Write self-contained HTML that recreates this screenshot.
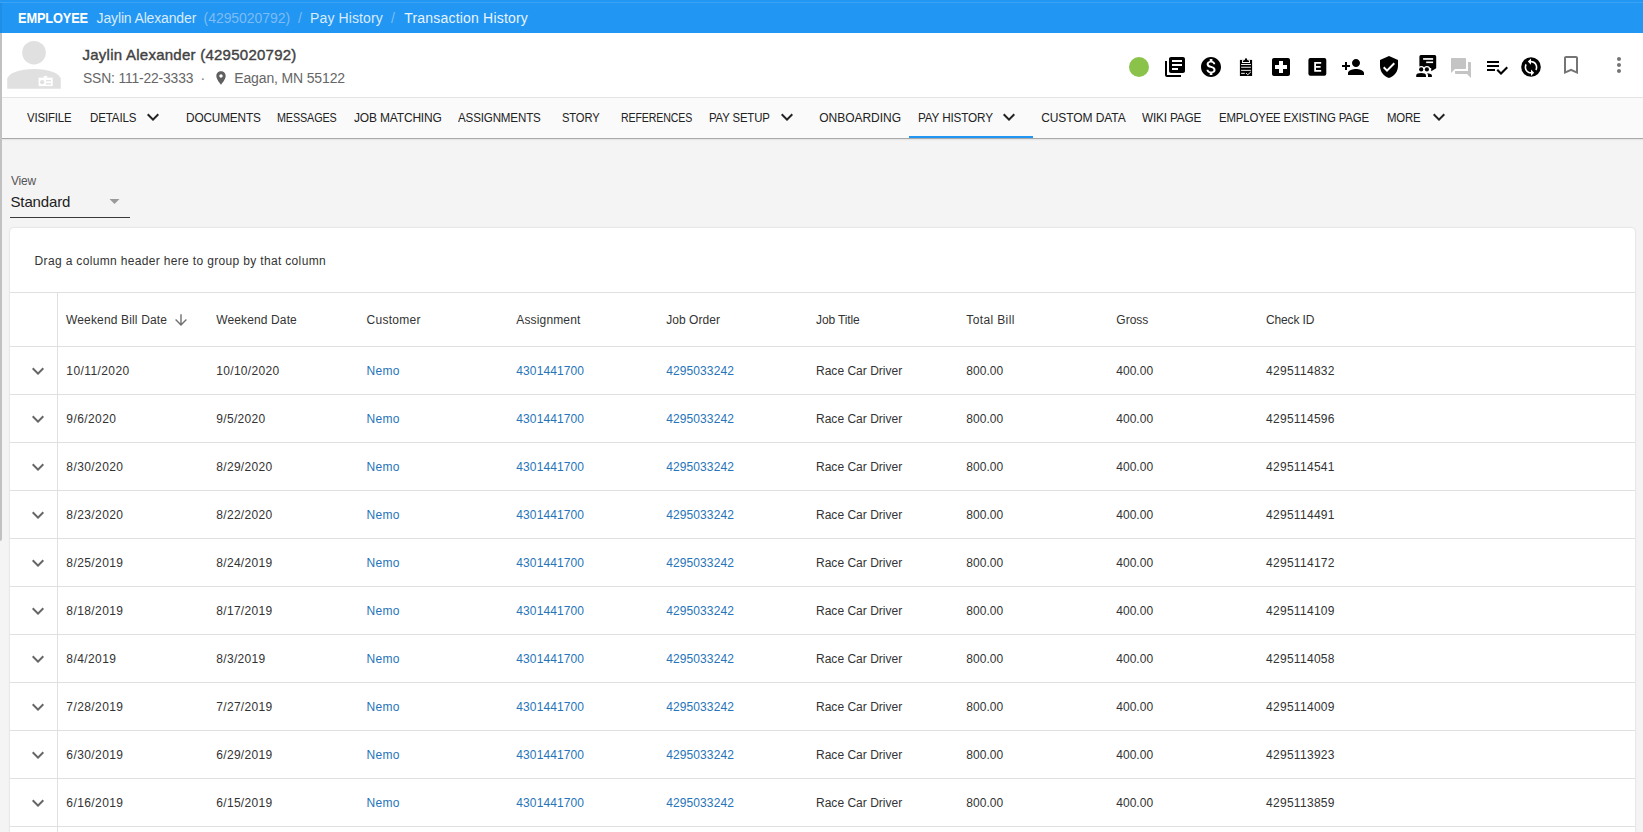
<!DOCTYPE html>
<html><head><meta charset="utf-8"><title>Transaction History</title>
<style>
html,body{margin:0;padding:0}
body{width:1643px;height:832px;overflow:hidden;position:relative;background:#f4f4f4;font-family:"Liberation Sans",sans-serif}
.t{position:absolute;white-space:nowrap;line-height:1;transform-origin:0 0}
.a{position:absolute}
svg.a{overflow:visible}
</style></head><body>
<!-- top bar -->
<div class="a" style="left:0;top:0;width:1643px;height:33px;background:#2196f3"></div>
<div class="a" style="left:0;top:2px;width:1643px;height:1px;background:#3da3f5"></div>
<!-- header -->
<div class="a" style="left:0;top:33px;width:1643px;height:64px;background:#ffffff"></div>
<div class="a" style="left:0;top:97px;width:1643px;height:1px;background:#e4e4e4"></div>
<svg class="a" style="left:0;top:0" width="80" height="100" viewBox="0 0 80 100">
 <circle cx="34" cy="52.7" r="11.8" fill="#e0e0e0"/>
 <path d="M7.2 88.7V79.6A26.8 10.7 0 0 1 60.8 79.6V88.7Z" fill="#e0e0e0"/>
 <rect x="38.6" y="77.6" width="14.1" height="8.5" fill="#fff"/>
 <rect x="43.8" y="75.9" width="3.4" height="2" fill="#fff"/>
 <circle cx="42.2" cy="82.2" r="2.1" fill="#e0e0e0"/>
 <rect x="46" y="80.1" width="5" height="1.2" fill="#e0e0e0"/>
 <rect x="46" y="83.2" width="5" height="1.4" fill="#e0e0e0"/>
</svg>
<svg class="a" style="left:213.4px;top:69.9px" width="16" height="16" viewBox="0 0 24 24"><path fill="#5f5f5f" d="M12 2C8.13 2 5 5.13 5 9c0 5.25 7 13 7 13s7-7.75 7-13c0-3.87-3.13-7-7-7zm0 9.5c-1.38 0-2.5-1.12-2.5-2.5s1.12-2.5 2.5-2.5 2.5 1.12 2.5 2.5-1.12 2.5-2.5 2.5z"/></svg>
<!-- header icons -->
<div class="a" style="left:1129px;top:57px;width:20px;height:20px;border-radius:50%;background:#8bc34a"></div>
<svg class="a" style="left:1163px;top:55px" width="24" height="24" viewBox="0 0 24 24"><path fill="#000" d="M4 6H2v14c0 1.1.9 2 2 2h14v-2H4V6zm16-4H8c-1.1 0-2 .9-2 2v12c0 1.1.9 2 2 2h12c1.1 0 2-.9 2-2V4c0-1.1-.9-2-2-2zm-1 9H9V9h10v2zm-4 4H9v-2h6v2zm4-8H9V5h10v2z"/></svg>
<svg class="a" style="left:1199px;top:55px" width="24" height="24" viewBox="0 0 24 24"><path fill="#000" d="M12 2C6.48 2 2 6.48 2 12s4.48 10 10 10 10-4.48 10-10S17.52 2 12 2zm1.41 16.09V20h-2.67v-1.93c-1.71-.36-3.16-1.46-3.27-3.4h1.96c.1 1.05.82 1.870 2.65 1.87 1.96 0 2.4-.98 2.4-1.59 0-.83-.44-1.61-2.67-2.14-2.480-.6-4.18-1.62-4.18-3.67 0-1.72 1.39-2.84 3.11-3.21V4h2.67v1.95c1.86.45 2.79 1.86 2.85 3.39H14.3c-.05-1.11-.64-1.87-2.22-1.87-1.5 0-2.4.68-2.4 1.64 0 .84.65 1.39 2.67 1.910s4.18 1.39 4.18 3.91c-.01 1.83-1.38 2.83-3.12 3.16z"/></svg>
<svg class="a" style="left:1232px;top:52px" width="24" height="28" viewBox="0 0 24 28">
 <path fill="#000" d="M7.9 7.9H20.1V24H7.9Z"/>
 <path fill="#fff" d="M10 11V8.2L12.2 7.4L14 5L15.8 7.4L18 8.2V11Z"/>
 <path fill="#000" d="M10.9 10.1V8.8L12.8 8.1L14 6.2L15.2 8.1L17.1 8.8V10.1Z"/>
 <path fill="#000" d="M12.5 8.2L14 5.8L15.5 8.2Z"/>
 <rect x="9.1" y="12.05" width="9.8" height="0.95" fill="#fff"/>
 <rect x="9.1" y="14.75" width="9.8" height="0.95" fill="#fff"/>
 <rect x="9.1" y="17.85" width="9.8" height="0.95" fill="#fff"/>
 <rect x="9.1" y="20.85" width="3.7" height="0.95" fill="#fff"/>
 <path d="M14 21L15.7 22.8L18.9 19.9" stroke="#fff" stroke-width="0.9" fill="none"/>
</svg>
<svg class="a" style="left:1269px;top:55px" width="24" height="24" viewBox="0 0 24 24"><path fill="#000" d="M19 3H5c-1.1 0-1.99.9-1.99 2L3 19c0 1.1.9 2 2 2h14c1.1 0 2-.9 2-2V5c0-1.1-.9-2-2-2zm-1 11h-4v4h-4v-4H6v-4h4V6h4v4h4v4z"/></svg>
<svg class="a" style="left:1308px;top:57px" width="19" height="20" viewBox="0 0 19 20">
 <rect x="0.4" y="1.1" width="17.9" height="17.6" rx="2" fill="#000"/>
 <path fill="#fff" d="M6.2 5H13.2V6.7H8V9H12.6V10.7H8V13.1H13.2V14.8H6.2Z"/>
</svg>
<svg class="a" style="left:1340.6px;top:55px" width="24" height="24" viewBox="0 0 24 24"><path fill="#000" d="M15 12c2.21 0 4-1.79 4-4s-1.79-4-4-4-4 1.79-4 4 1.79 4 4 4zm-9-2V7H4v3H1v2h3v3h2v-3h3v-2H6zm9 4c-2.67 0-8 1.34-8 4v2h16v-2c0-2.66-5.33-4-8-4z"/></svg>
<svg class="a" style="left:1376.7px;top:55px" width="24" height="24" viewBox="0 0 24 24"><path fill="#000" d="M12 1L3 5v6c0 5.550 3.84 10.74 9 12 5.16-1.26 9-6.45 9-12V5l-9-4zm-2 16l-4-4 1.41-1.41L10 14.17l6.59-6.59L18 9l-8 8z"/></svg>
<svg class="a" style="left:1410px;top:50px" width="32" height="32" viewBox="0 0 32 32">
 <path fill="#000" d="M10.9 5H24.7Q26.2 5 26.2 6.5V18.3L21.2 21.2V18H9.4V6.5Q9.4 5 10.9 5Z"/>
 <rect x="13.1" y="8.1" width="10" height="1.7" fill="#fff"/>
 <rect x="16.2" y="11.5" width="6.9" height="1.6" fill="#fff"/>
 <circle cx="11.2" cy="19.4" r="3.5" fill="#fff"/>
 <circle cx="16.9" cy="19.4" r="3.5" fill="#fff"/>
 <rect x="8" y="18" width="12" height="4" fill="#fff"/>
 <circle cx="11.2" cy="19.4" r="2.1" fill="#000"/>
 <circle cx="16.9" cy="19.4" r="2.1" fill="#000"/>
 <path fill="#000" d="M6.2 26.9V25.4C6.2 23.9 8.4 23.1 11.1 23.1C13.8 23.1 16 23.9 16 25.4V26.9Z"/>
 <path fill="#000" d="M17.1 23.2C19.8 23.3 21.9 24.1 21.9 25.5V26.9H18V25.4C18 24.6 17.7 23.8 17.1 23.2Z"/>
</svg>
<svg class="a" style="left:1449px;top:55.5px" width="24" height="24" viewBox="0 0 24 24"><path fill="#c4c4c4" d="M21 6h-2v9H6v2c0 .55.45 1 1 1h11l4 4V7c0-.55-.45-1-1-1zm-4 6V3c0-.55-.45-1-1-1H3c-.55 0-1 .45-1 1v14l4-4h10c.55 0 1-.45 1-1z"/></svg>
<svg class="a" style="left:1485px;top:54.8px" width="24" height="24" viewBox="0 0 24 24"><path fill="#000" d="M14 10H2v2h12v-2zm0-4H2v2h12V6zM2 16h8v-2H2v2zm19.5-4.5L23 13l-6.99 7-4.51-4.5L13 14l3.01 3 5.49-5.5z"/></svg>
<svg class="a" style="left:1519px;top:54.7px" width="24" height="24" viewBox="0 0 24 24">
 <circle cx="12" cy="12" r="9.8" fill="#000"/>
 <g transform="translate(12 12.2) scale(0.8) translate(-12 -12)"><path fill="#fff" d="M12 4V1L8 5l4 4V6c3.31 0 6 2.69 6 6 0 1.01-.25 1.97-.7 2.8l1.46 1.46C19.54 15.030 20 13.57 20 12c0-4.42-3.58-8-8-8zm0 14c-3.31 0-6-2.69-6-6 0-1.01.25-1.97.7-2.8L5.24 7.74C4.46 8.97 4 10.43 4 12c0 4.42 3.58 8 8 8v3l4-4-4-4v3z"/></g>
</svg>
<svg class="a" style="left:1558.7px;top:52.7px" width="24" height="24" viewBox="0 0 24 24"><path fill="#757575" d="M17 3H7c-1.1 0-1.99.9-1.99 2L5 21l7-3 7 3V5c0-1.1-.9-2-2-2zm0 15l-5-2.18L7 18V5h10v13z"/></svg>
<svg class="a" style="left:1607px;top:53px" width="24" height="24" viewBox="0 0 24 24"><path fill="#757575" d="M12 8c1.1 0 2-.9 2-2s-.9-2-2-2-2 .9-2 2 .9 2 2 2zm0 2c-1.1 0-2 .9-2 2s.9 2 2 2 2-.9 2-2-.9-2-2-2zm0 6c-1.1 0-2 .9-2 2s.9 2 2 2 2-.9 2-2-.9-2-2-2z"/></svg>
<!-- nav -->
<div class="a" style="left:0;top:98px;width:1643px;height:40px;background:#fafafa"></div>
<div class="a" style="left:0;top:138px;width:1643px;height:1px;background:#a8a8a8"></div>
<div class="a" style="left:0;top:139px;width:1643px;height:2px;background:linear-gradient(#e2e2e2,#f4f4f4)"></div>
<div class="a" style="left:909px;top:136px;width:124px;height:2px;background:#2196f3"></div>
<svg class="a" style="left:141.3px;top:105.1px" width="24" height="24" viewBox="0 0 24 24"><path fill="#222" d="M16.59 8.59L12 13.17 7.41 8.59 6 10l6 6 6-6z"/></svg>
<svg class="a" style="left:775.4px;top:105.1px" width="24" height="24" viewBox="0 0 24 24"><path fill="#222" d="M16.59 8.59L12 13.17 7.41 8.59 6 10l6 6 6-6z"/></svg>
<svg class="a" style="left:997px;top:105.1px" width="24" height="24" viewBox="0 0 24 24"><path fill="#222" d="M16.59 8.59L12 13.17 7.41 8.59 6 10l6 6 6-6z"/></svg>
<svg class="a" style="left:1427.3px;top:105.1px" width="24" height="24" viewBox="0 0 24 24"><path fill="#222" d="M16.59 8.59L12 13.17 7.41 8.59 6 10l6 6 6-6z"/></svg>
<!-- view select -->
<div class="a" style="left:10px;top:217px;width:120px;height:1px;background:#3a3a3a"></div>
<svg class="a" style="left:109px;top:198px" width="12" height="7" viewBox="0 0 12 7"><path fill="#9a9a9a" d="M0.5 1H10.5L5.5 6Z"/></svg>
<!-- card -->
<div class="a" style="left:10px;top:228px;width:1625px;height:620px;background:#fff;border-radius:4px;box-shadow:0 0 2px rgba(0,0,0,0.18)"></div>
<div class="a" style="left:10px;top:292px;width:1625px;height:1px;background:#e0e0e0"></div>
<div class="a" style="left:57px;top:293px;width:1px;height:560px;background:#e0e0e0"></div>
<div class="a" style="left:10px;top:346px;width:1625px;height:1px;background:#e0e0e0"></div>
<div class="a" style="left:10px;top:394px;width:1625px;height:1px;background:#e0e0e0"></div>
<div class="a" style="left:10px;top:442px;width:1625px;height:1px;background:#e0e0e0"></div>
<div class="a" style="left:10px;top:490px;width:1625px;height:1px;background:#e0e0e0"></div>
<div class="a" style="left:10px;top:538px;width:1625px;height:1px;background:#e0e0e0"></div>
<div class="a" style="left:10px;top:586px;width:1625px;height:1px;background:#e0e0e0"></div>
<div class="a" style="left:10px;top:634px;width:1625px;height:1px;background:#e0e0e0"></div>
<div class="a" style="left:10px;top:682px;width:1625px;height:1px;background:#e0e0e0"></div>
<div class="a" style="left:10px;top:730px;width:1625px;height:1px;background:#e0e0e0"></div>
<div class="a" style="left:10px;top:778px;width:1625px;height:1px;background:#e0e0e0"></div>
<div class="a" style="left:10px;top:826px;width:1625px;height:1px;background:#e0e0e0"></div>
<svg class="a" style="left:0;top:0" width="200" height="340" viewBox="0 0 200 340"><path d="M181 314.2V325M175.6 319.6L181 325L186.4 319.6" stroke="#707070" stroke-width="1.4" fill="none"/></svg>
<svg class="a" style="left:26px;top:358.9px" width="24" height="24" viewBox="0 0 24 24"><path fill="#666" d="M16.59 8.59L12 13.17 7.41 8.59 6 10l6 6 6-6z"/></svg>
<svg class="a" style="left:26px;top:406.9px" width="24" height="24" viewBox="0 0 24 24"><path fill="#666" d="M16.59 8.59L12 13.17 7.41 8.59 6 10l6 6 6-6z"/></svg>
<svg class="a" style="left:26px;top:454.9px" width="24" height="24" viewBox="0 0 24 24"><path fill="#666" d="M16.59 8.59L12 13.17 7.41 8.59 6 10l6 6 6-6z"/></svg>
<svg class="a" style="left:26px;top:502.9px" width="24" height="24" viewBox="0 0 24 24"><path fill="#666" d="M16.59 8.59L12 13.17 7.41 8.59 6 10l6 6 6-6z"/></svg>
<svg class="a" style="left:26px;top:550.9px" width="24" height="24" viewBox="0 0 24 24"><path fill="#666" d="M16.59 8.59L12 13.17 7.41 8.59 6 10l6 6 6-6z"/></svg>
<svg class="a" style="left:26px;top:598.9px" width="24" height="24" viewBox="0 0 24 24"><path fill="#666" d="M16.59 8.59L12 13.17 7.41 8.59 6 10l6 6 6-6z"/></svg>
<svg class="a" style="left:26px;top:646.9px" width="24" height="24" viewBox="0 0 24 24"><path fill="#666" d="M16.59 8.59L12 13.17 7.41 8.59 6 10l6 6 6-6z"/></svg>
<svg class="a" style="left:26px;top:694.9px" width="24" height="24" viewBox="0 0 24 24"><path fill="#666" d="M16.59 8.59L12 13.17 7.41 8.59 6 10l6 6 6-6z"/></svg>
<svg class="a" style="left:26px;top:742.9px" width="24" height="24" viewBox="0 0 24 24"><path fill="#666" d="M16.59 8.59L12 13.17 7.41 8.59 6 10l6 6 6-6z"/></svg>
<svg class="a" style="left:26px;top:790.9px" width="24" height="24" viewBox="0 0 24 24"><path fill="#666" d="M16.59 8.59L12 13.17 7.41 8.59 6 10l6 6 6-6z"/></svg>
<!-- scrollbar thumb -->
<div class="a" style="left:0;top:33px;width:2px;height:508px;background:#c1c1c1;border-radius:0 0 2px 0"></div>
<div class="a" style="left:0;top:3px;width:2px;height:30px;background:#1e8ee6"></div>
<div class="t" style="left:18.30px;top:11.15px;font-size:14px;color:#ffffff;font-weight:700;letter-spacing:-0.150px;transform:scaleX(0.9136);">EMPLOYEE</div>
<div class="t" style="left:96.60px;top:11.15px;font-size:14px;color:#d9ecfd;letter-spacing:-0.150px;">Jaylin Alexander</div>
<div class="t" style="left:203.60px;top:11.15px;font-size:14px;color:#7dbcf4;letter-spacing:-0.066px;">(4295020792)</div>
<div class="t" style="left:298.00px;top:11.15px;font-size:14px;color:#7dbcf4;">/</div>
<div class="t" style="left:310.10px;top:11.15px;font-size:14px;color:#d9ecfd;letter-spacing:0.103px;">Pay History</div>
<div class="t" style="left:391.00px;top:11.15px;font-size:14px;color:#7dbcf4;">/</div>
<div class="t" style="left:404.30px;top:11.15px;font-size:14px;color:#e8f4fe;letter-spacing:0.190px;">Transaction History</div>
<div class="t" style="left:82.50px;top:46.70px;font-size:15px;color:#424242;letter-spacing:0.252px;-webkit-text-stroke:0.4px #424242;">Jaylin Alexander (4295020792)</div>
<div class="t" style="left:82.50px;top:70.65px;font-size:14px;color:#666666;letter-spacing:-0.150px;transform:scaleX(0.9888);">SSN: 111-22-3333</div>
<div class="t" style="left:200.50px;top:70.65px;font-size:14px;color:#777777;">·</div>
<div class="t" style="left:234.30px;top:70.65px;font-size:14px;color:#666666;letter-spacing:-0.150px;">Eagan, MN 55122</div>
<div class="t" style="left:27.00px;top:111.74px;font-size:12px;color:#222222;letter-spacing:-0.150px;transform:scaleX(0.9475);">VISIFILE</div>
<div class="t" style="left:90.00px;top:111.74px;font-size:12px;color:#222222;letter-spacing:-0.150px;transform:scaleX(0.9643);">DETAILS</div>
<div class="t" style="left:185.50px;top:111.74px;font-size:12px;color:#222222;letter-spacing:-0.150px;transform:scaleX(0.9839);">DOCUMENTS</div>
<div class="t" style="left:276.80px;top:111.74px;font-size:12px;color:#222222;letter-spacing:-0.150px;transform:scaleX(0.9005);">MESSAGES</div>
<div class="t" style="left:353.50px;top:111.74px;font-size:12px;color:#222222;letter-spacing:-0.150px;transform:scaleX(0.9967);">JOB MATCHING</div>
<div class="t" style="left:457.90px;top:111.74px;font-size:12px;color:#222222;letter-spacing:-0.150px;transform:scaleX(0.9646);">ASSIGNMENTS</div>
<div class="t" style="left:562.00px;top:111.74px;font-size:12px;color:#222222;letter-spacing:-0.150px;transform:scaleX(0.9330);">STORY</div>
<div class="t" style="left:621.00px;top:111.74px;font-size:12px;color:#222222;letter-spacing:-0.150px;transform:scaleX(0.8852);">REFERENCES</div>
<div class="t" style="left:709.00px;top:111.74px;font-size:12px;color:#222222;letter-spacing:-0.150px;transform:scaleX(0.9477);">PAY SETUP</div>
<div class="t" style="left:819.20px;top:111.74px;font-size:12px;color:#222222;letter-spacing:-0.019px;">ONBOARDING</div>
<div class="t" style="left:917.80px;top:111.74px;font-size:12px;color:#222222;letter-spacing:-0.150px;transform:scaleX(0.9771);">PAY HISTORY</div>
<div class="t" style="left:1041.20px;top:111.74px;font-size:12px;color:#222222;letter-spacing:-0.083px;">CUSTOM DATA</div>
<div class="t" style="left:1142.40px;top:111.74px;font-size:12px;color:#222222;letter-spacing:-0.150px;transform:scaleX(0.9805);">WIKI PAGE</div>
<div class="t" style="left:1219.00px;top:111.74px;font-size:12px;color:#222222;letter-spacing:-0.150px;transform:scaleX(0.9494);">EMPLOYEE EXISTING PAGE</div>
<div class="t" style="left:1386.50px;top:111.74px;font-size:12px;color:#222222;letter-spacing:-0.150px;transform:scaleX(0.9481);">MORE</div>
<div class="t" style="left:10.50px;top:174.64px;font-size:12px;color:#555555;letter-spacing:-0.150px;transform:scaleX(0.9931);">View</div>
<div class="t" style="left:10.50px;top:193.80px;font-size:15px;color:#212121;letter-spacing:-0.134px;">Standard</div>
<div class="t" style="left:34.60px;top:254.84px;font-size:12px;color:#333333;letter-spacing:0.338px;">Drag a column header here to group by that column</div>
<div class="t" style="left:66.00px;top:314.34px;font-size:12px;color:#333333;letter-spacing:0.155px;">Weekend Bill Date</div>
<div class="t" style="left:216.30px;top:314.34px;font-size:12px;color:#333333;letter-spacing:0.119px;">Weekend Date</div>
<div class="t" style="left:366.50px;top:314.34px;font-size:12px;color:#333333;letter-spacing:0.283px;">Customer</div>
<div class="t" style="left:516.30px;top:314.34px;font-size:12px;color:#333333;letter-spacing:0.149px;">Assignment</div>
<div class="t" style="left:666.20px;top:314.34px;font-size:12px;color:#333333;letter-spacing:0.055px;">Job Order</div>
<div class="t" style="left:816.00px;top:314.34px;font-size:12px;color:#333333;letter-spacing:-0.117px;">Job Title</div>
<div class="t" style="left:966.30px;top:314.34px;font-size:12px;color:#333333;letter-spacing:0.376px;">Total Bill</div>
<div class="t" style="left:1116.30px;top:314.34px;font-size:12px;color:#333333;">Gross</div>
<div class="t" style="left:1266.00px;top:314.34px;font-size:12px;color:#333333;letter-spacing:-0.140px;">Check ID</div>
<div class="t" style="left:66.30px;top:365.24px;font-size:12px;color:#333333;letter-spacing:0.410px;">10/11/2020</div>
<div class="t" style="left:216.30px;top:365.24px;font-size:12px;color:#333333;letter-spacing:0.302px;">10/10/2020</div>
<div class="t" style="left:366.50px;top:365.24px;font-size:12px;color:#2674b8;letter-spacing:0.321px;">Nemo</div>
<div class="t" style="left:516.30px;top:365.24px;font-size:12px;color:#2674b8;letter-spacing:0.104px;">4301441700</div>
<div class="t" style="left:666.20px;top:365.24px;font-size:12px;color:#2674b8;letter-spacing:0.104px;">4295033242</div>
<div class="t" style="left:816.00px;top:365.24px;font-size:12px;color:#333333;letter-spacing:0.013px;">Race Car Driver</div>
<div class="t" style="left:966.30px;top:365.24px;font-size:12px;color:#333333;letter-spacing:0.034px;">800.00</div>
<div class="t" style="left:1116.30px;top:365.24px;font-size:12px;color:#333333;letter-spacing:0.014px;">400.00</div>
<div class="t" style="left:1266.00px;top:365.24px;font-size:12px;color:#333333;letter-spacing:0.294px;">4295114832</div>
<div class="t" style="left:66.30px;top:413.24px;font-size:12px;color:#333333;letter-spacing:0.417px;">9/6/2020</div>
<div class="t" style="left:216.30px;top:413.24px;font-size:12px;color:#333333;letter-spacing:0.302px;">9/5/2020</div>
<div class="t" style="left:366.50px;top:413.24px;font-size:12px;color:#2674b8;letter-spacing:0.321px;">Nemo</div>
<div class="t" style="left:516.30px;top:413.24px;font-size:12px;color:#2674b8;letter-spacing:0.104px;">4301441700</div>
<div class="t" style="left:666.20px;top:413.24px;font-size:12px;color:#2674b8;letter-spacing:0.104px;">4295033242</div>
<div class="t" style="left:816.00px;top:413.24px;font-size:12px;color:#333333;letter-spacing:0.013px;">Race Car Driver</div>
<div class="t" style="left:966.30px;top:413.24px;font-size:12px;color:#333333;letter-spacing:0.034px;">800.00</div>
<div class="t" style="left:1116.30px;top:413.24px;font-size:12px;color:#333333;letter-spacing:0.014px;">400.00</div>
<div class="t" style="left:1266.00px;top:413.24px;font-size:12px;color:#333333;letter-spacing:0.294px;">4295114596</div>
<div class="t" style="left:66.30px;top:461.24px;font-size:12px;color:#333333;letter-spacing:0.416px;">8/30/2020</div>
<div class="t" style="left:216.30px;top:461.24px;font-size:12px;color:#333333;letter-spacing:0.302px;">8/29/2020</div>
<div class="t" style="left:366.50px;top:461.24px;font-size:12px;color:#2674b8;letter-spacing:0.321px;">Nemo</div>
<div class="t" style="left:516.30px;top:461.24px;font-size:12px;color:#2674b8;letter-spacing:0.104px;">4301441700</div>
<div class="t" style="left:666.20px;top:461.24px;font-size:12px;color:#2674b8;letter-spacing:0.104px;">4295033242</div>
<div class="t" style="left:816.00px;top:461.24px;font-size:12px;color:#333333;letter-spacing:0.013px;">Race Car Driver</div>
<div class="t" style="left:966.30px;top:461.24px;font-size:12px;color:#333333;letter-spacing:0.034px;">800.00</div>
<div class="t" style="left:1116.30px;top:461.24px;font-size:12px;color:#333333;letter-spacing:0.014px;">400.00</div>
<div class="t" style="left:1266.00px;top:461.24px;font-size:12px;color:#333333;letter-spacing:0.294px;">4295114541</div>
<div class="t" style="left:66.30px;top:509.24px;font-size:12px;color:#333333;letter-spacing:0.416px;">8/23/2020</div>
<div class="t" style="left:216.30px;top:509.24px;font-size:12px;color:#333333;letter-spacing:0.302px;">8/22/2020</div>
<div class="t" style="left:366.50px;top:509.24px;font-size:12px;color:#2674b8;letter-spacing:0.321px;">Nemo</div>
<div class="t" style="left:516.30px;top:509.24px;font-size:12px;color:#2674b8;letter-spacing:0.104px;">4301441700</div>
<div class="t" style="left:666.20px;top:509.24px;font-size:12px;color:#2674b8;letter-spacing:0.104px;">4295033242</div>
<div class="t" style="left:816.00px;top:509.24px;font-size:12px;color:#333333;letter-spacing:0.013px;">Race Car Driver</div>
<div class="t" style="left:966.30px;top:509.24px;font-size:12px;color:#333333;letter-spacing:0.034px;">800.00</div>
<div class="t" style="left:1116.30px;top:509.24px;font-size:12px;color:#333333;letter-spacing:0.014px;">400.00</div>
<div class="t" style="left:1266.00px;top:509.24px;font-size:12px;color:#333333;letter-spacing:0.294px;">4295114491</div>
<div class="t" style="left:66.30px;top:557.24px;font-size:12px;color:#333333;letter-spacing:0.416px;">8/25/2019</div>
<div class="t" style="left:216.30px;top:557.24px;font-size:12px;color:#333333;letter-spacing:0.302px;">8/24/2019</div>
<div class="t" style="left:366.50px;top:557.24px;font-size:12px;color:#2674b8;letter-spacing:0.321px;">Nemo</div>
<div class="t" style="left:516.30px;top:557.24px;font-size:12px;color:#2674b8;letter-spacing:0.104px;">4301441700</div>
<div class="t" style="left:666.20px;top:557.24px;font-size:12px;color:#2674b8;letter-spacing:0.104px;">4295033242</div>
<div class="t" style="left:816.00px;top:557.24px;font-size:12px;color:#333333;letter-spacing:0.013px;">Race Car Driver</div>
<div class="t" style="left:966.30px;top:557.24px;font-size:12px;color:#333333;letter-spacing:0.034px;">800.00</div>
<div class="t" style="left:1116.30px;top:557.24px;font-size:12px;color:#333333;letter-spacing:0.014px;">400.00</div>
<div class="t" style="left:1266.00px;top:557.24px;font-size:12px;color:#333333;letter-spacing:0.294px;">4295114172</div>
<div class="t" style="left:66.30px;top:605.24px;font-size:12px;color:#333333;letter-spacing:0.416px;">8/18/2019</div>
<div class="t" style="left:216.30px;top:605.24px;font-size:12px;color:#333333;letter-spacing:0.302px;">8/17/2019</div>
<div class="t" style="left:366.50px;top:605.24px;font-size:12px;color:#2674b8;letter-spacing:0.321px;">Nemo</div>
<div class="t" style="left:516.30px;top:605.24px;font-size:12px;color:#2674b8;letter-spacing:0.104px;">4301441700</div>
<div class="t" style="left:666.20px;top:605.24px;font-size:12px;color:#2674b8;letter-spacing:0.104px;">4295033242</div>
<div class="t" style="left:816.00px;top:605.24px;font-size:12px;color:#333333;letter-spacing:0.013px;">Race Car Driver</div>
<div class="t" style="left:966.30px;top:605.24px;font-size:12px;color:#333333;letter-spacing:0.034px;">800.00</div>
<div class="t" style="left:1116.30px;top:605.24px;font-size:12px;color:#333333;letter-spacing:0.014px;">400.00</div>
<div class="t" style="left:1266.00px;top:605.24px;font-size:12px;color:#333333;letter-spacing:0.294px;">4295114109</div>
<div class="t" style="left:66.30px;top:653.24px;font-size:12px;color:#333333;letter-spacing:0.417px;">8/4/2019</div>
<div class="t" style="left:216.30px;top:653.24px;font-size:12px;color:#333333;letter-spacing:0.302px;">8/3/2019</div>
<div class="t" style="left:366.50px;top:653.24px;font-size:12px;color:#2674b8;letter-spacing:0.321px;">Nemo</div>
<div class="t" style="left:516.30px;top:653.24px;font-size:12px;color:#2674b8;letter-spacing:0.104px;">4301441700</div>
<div class="t" style="left:666.20px;top:653.24px;font-size:12px;color:#2674b8;letter-spacing:0.104px;">4295033242</div>
<div class="t" style="left:816.00px;top:653.24px;font-size:12px;color:#333333;letter-spacing:0.013px;">Race Car Driver</div>
<div class="t" style="left:966.30px;top:653.24px;font-size:12px;color:#333333;letter-spacing:0.034px;">800.00</div>
<div class="t" style="left:1116.30px;top:653.24px;font-size:12px;color:#333333;letter-spacing:0.014px;">400.00</div>
<div class="t" style="left:1266.00px;top:653.24px;font-size:12px;color:#333333;letter-spacing:0.294px;">4295114058</div>
<div class="t" style="left:66.30px;top:701.24px;font-size:12px;color:#333333;letter-spacing:0.416px;">7/28/2019</div>
<div class="t" style="left:216.30px;top:701.24px;font-size:12px;color:#333333;letter-spacing:0.302px;">7/27/2019</div>
<div class="t" style="left:366.50px;top:701.24px;font-size:12px;color:#2674b8;letter-spacing:0.321px;">Nemo</div>
<div class="t" style="left:516.30px;top:701.24px;font-size:12px;color:#2674b8;letter-spacing:0.104px;">4301441700</div>
<div class="t" style="left:666.20px;top:701.24px;font-size:12px;color:#2674b8;letter-spacing:0.104px;">4295033242</div>
<div class="t" style="left:816.00px;top:701.24px;font-size:12px;color:#333333;letter-spacing:0.013px;">Race Car Driver</div>
<div class="t" style="left:966.30px;top:701.24px;font-size:12px;color:#333333;letter-spacing:0.034px;">800.00</div>
<div class="t" style="left:1116.30px;top:701.24px;font-size:12px;color:#333333;letter-spacing:0.014px;">400.00</div>
<div class="t" style="left:1266.00px;top:701.24px;font-size:12px;color:#333333;letter-spacing:0.294px;">4295114009</div>
<div class="t" style="left:66.30px;top:749.24px;font-size:12px;color:#333333;letter-spacing:0.416px;">6/30/2019</div>
<div class="t" style="left:216.30px;top:749.24px;font-size:12px;color:#333333;letter-spacing:0.302px;">6/29/2019</div>
<div class="t" style="left:366.50px;top:749.24px;font-size:12px;color:#2674b8;letter-spacing:0.321px;">Nemo</div>
<div class="t" style="left:516.30px;top:749.24px;font-size:12px;color:#2674b8;letter-spacing:0.104px;">4301441700</div>
<div class="t" style="left:666.20px;top:749.24px;font-size:12px;color:#2674b8;letter-spacing:0.104px;">4295033242</div>
<div class="t" style="left:816.00px;top:749.24px;font-size:12px;color:#333333;letter-spacing:0.013px;">Race Car Driver</div>
<div class="t" style="left:966.30px;top:749.24px;font-size:12px;color:#333333;letter-spacing:0.034px;">800.00</div>
<div class="t" style="left:1116.30px;top:749.24px;font-size:12px;color:#333333;letter-spacing:0.014px;">400.00</div>
<div class="t" style="left:1266.00px;top:749.24px;font-size:12px;color:#333333;letter-spacing:0.294px;">4295113923</div>
<div class="t" style="left:66.30px;top:797.24px;font-size:12px;color:#333333;letter-spacing:0.416px;">6/16/2019</div>
<div class="t" style="left:216.30px;top:797.24px;font-size:12px;color:#333333;letter-spacing:0.302px;">6/15/2019</div>
<div class="t" style="left:366.50px;top:797.24px;font-size:12px;color:#2674b8;letter-spacing:0.321px;">Nemo</div>
<div class="t" style="left:516.30px;top:797.24px;font-size:12px;color:#2674b8;letter-spacing:0.104px;">4301441700</div>
<div class="t" style="left:666.20px;top:797.24px;font-size:12px;color:#2674b8;letter-spacing:0.104px;">4295033242</div>
<div class="t" style="left:816.00px;top:797.24px;font-size:12px;color:#333333;letter-spacing:0.013px;">Race Car Driver</div>
<div class="t" style="left:966.30px;top:797.24px;font-size:12px;color:#333333;letter-spacing:0.034px;">800.00</div>
<div class="t" style="left:1116.30px;top:797.24px;font-size:12px;color:#333333;letter-spacing:0.014px;">400.00</div>
<div class="t" style="left:1266.00px;top:797.24px;font-size:12px;color:#333333;letter-spacing:0.294px;">4295113859</div>
</body></html>
